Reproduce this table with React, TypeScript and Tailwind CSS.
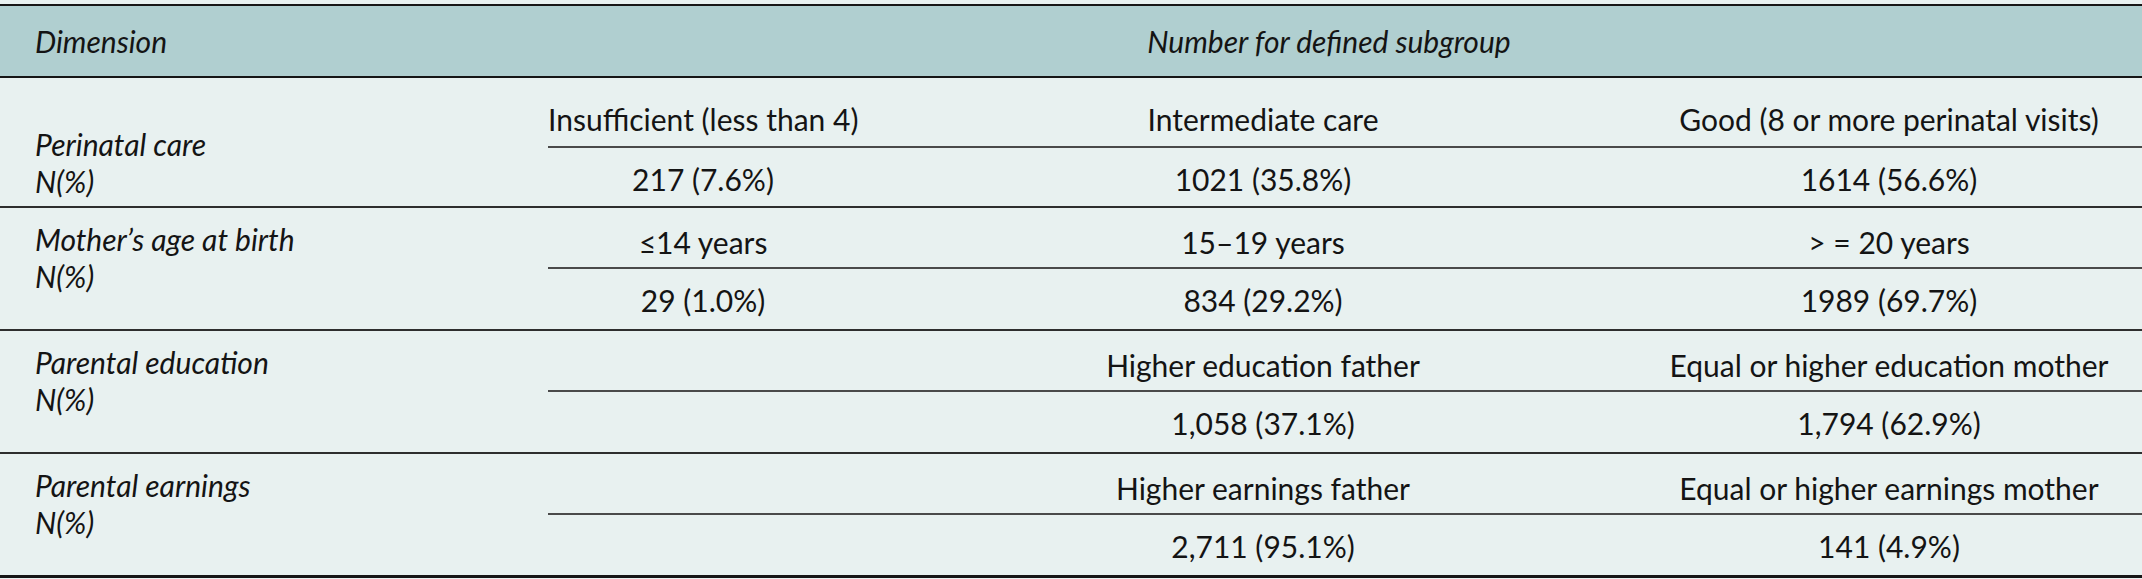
import React from "react";

type Row = {
  label: string;
  a: [string, string, string];
  b: [string, string, string];
  first?: boolean;
};

const rows: Row[] = [
  {
    label: "Perinatal care",
    a: ["Insufficient (less than 4)", "Intermediate care", "Good (8 or more perinatal visits)"],
    b: ["217 (7.6%)", "1021 (35.8%)", "1614 (56.6%)"],
    first: true,
  },
  {
    label: "Mother\u2019s age at birth",
    a: ["\u226414 years", "15\u201319 years", "> = 20 years"],
    b: ["29 (1.0%)", "834 (29.2%)", "1989 (69.7%)"],
  },
  {
    label: "Parental education",
    a: ["", "Higher education father", "Equal or higher education mother"],
    b: ["", "1,058 (37.1%)", "1,794 (62.9%)"],
  },
  {
    label: "Parental earnings",
    a: ["", "Higher earnings father", "Equal or higher earnings mother"],
    b: ["", "2,711 (95.1%)", "141 (4.9%)"],
  },
];

function Cells({ vals }: { vals: [string, string, string] }) {
  return (
    <>
      <div className="text-center whitespace-nowrap">{vals[0]}</div>
      <div className="text-center whitespace-nowrap">{vals[1]}</div>
      <div className="text-center whitespace-nowrap pr-[32px]">{vals[2]}</div>
    </>
  );
}

function DataRow({ row, last }: { row: Row; last: boolean }) {
  const first = !!row.first;
  return (
    <>
      <div className={first ? "flex h-[128px]" : "flex h-[121px]"}>
        <div className={first ? "w-[548px] shrink-0 pl-[35px] pt-[48px] italic" : "w-[548px] shrink-0 pl-[35px] pt-[13px] italic"}>
          <div>{row.label}</div>
          <div>N(%)</div>
        </div>
        <div className="flex flex-1 flex-col">
          <div className={first ? "grid h-[68px] grid-cols-[310px_810px_1fr] pt-[23px]" : "grid h-[59px] grid-cols-[310px_810px_1fr] pt-[16px]"}>
            <Cells vals={row.a} />
          </div>
          <div className="h-[2px] bg-[#4a4a4a]" />
          <div className="grid flex-1 grid-cols-[310px_810px_1fr] pt-[13px]">
            <Cells vals={row.b} />
          </div>
        </div>
      </div>
      <div className={last ? "h-[3px] bg-[#161616]" : "h-[2px] bg-[#2e2e2e]"} />
    </>
  );
}

export default function App() {
  return (
    <div
      className="w-[2142px] h-[579px] bg-[#e8f1f0] text-[30px] leading-[37px] text-[#141414]"
      style={{ fontFamily: "Lato, 'Open Sans', sans-serif" }}
    >
      <div className="h-[4px]" />
      <div className="h-[2px] bg-[#161616]" />
      <div className="flex h-[70px] items-center bg-[#b0cfd0] italic">
        <div className="w-[548px] shrink-0 pl-[35px]">Dimension</div>
        <div className="flex-1 pr-[32px] text-center">Number for defined subgroup</div>
      </div>
      <div className="h-[2px] bg-[#161616]" />
      {rows.map((r, i) => (
        <DataRow key={i} row={r} last={i === rows.length - 1} />
      ))}
    </div>
  );
}
